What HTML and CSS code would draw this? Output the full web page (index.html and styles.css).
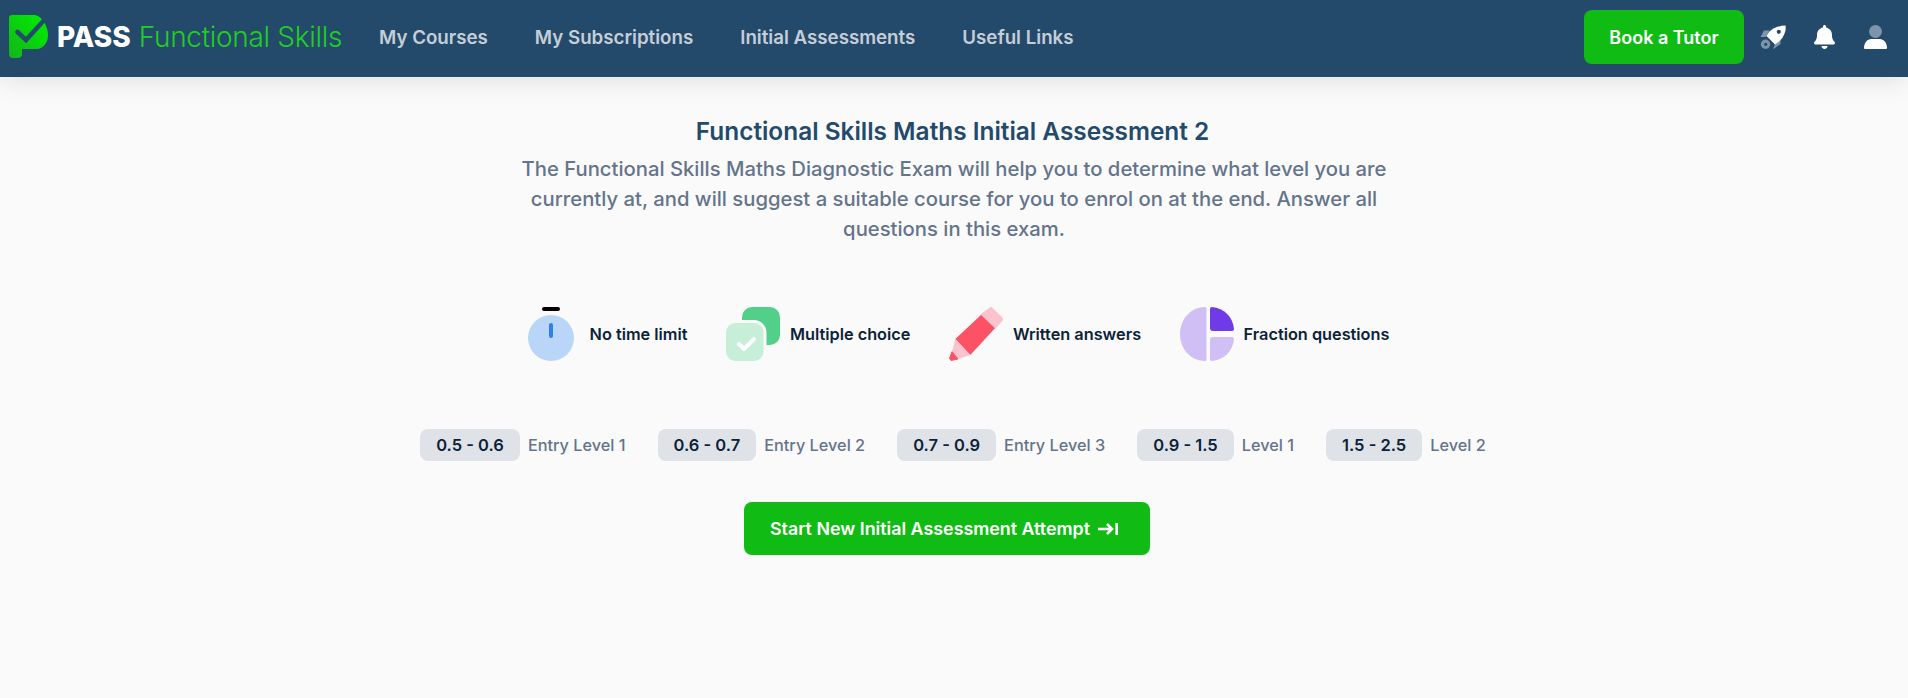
FILE: index.html
```html
<!DOCTYPE html>
<html lang="en">
  <head>
    <meta charset="UTF-8" />
    <meta name="viewport" content="width=device-width, initial-scale=1.0" />
    <title>Functional Skills Maths Initial Assessment 2</title>
    <link rel="stylesheet" href="styles.css">
  </head>
  <body>
    <header class="topbar">
      <a class="brand" href="#">
        <svg class="brand-mark" viewBox="0 0 40 44" width="40" height="44">
          <defs>
            <linearGradient id="markGreen" x1="0" y1="1" x2="1" y2="0">
              <stop offset="0" stop-color="#12b51a" />
              <stop offset="1" stop-color="#00f000" />
            </linearGradient>
          </defs>
          <path fill="url(#markGreen)" d="M3 0H26C34 2 39 12 39 20C39 30 32 34 28 34H13V39Q13 43 8 43H4Q0 43 0 39V3Q0 0 3 0Z" />
          <path fill="none" stroke="#244a6b" stroke-width="4.5" stroke-linecap="round" d="M8.5 17L17 25L38 2" />
        </svg>
        <span class="brand-pass">PASS</span>
        <span class="brand-name">Functional Skills</span>
      </a>
      <nav class="nav">
        <a href="#">My Courses</a>
        <a href="#">My Subscriptions</a>
        <a href="#">Initial Assessments</a>
        <a href="#">Useful Links</a>
      </nav>
      <div class="topbar-right">
        <a class="btn btn-tutor" href="#">Book a Tutor</a>
        <svg class="icon-rocket" viewBox="0 0 26 24" width="26" height="24">
          <path fill="#7d94aa" d="M9.500 5.500H4L0.500 12H6Z" />
          <path fill="#7d94aa" d="M20.500 14V19L13 24.500L15 19Z" />
          <circle cx="5.500" cy="19.300" r="4.700" fill="#7d94aa" />
          <circle cx="5.700" cy="19.300" r="1.600" fill="#244a6b" />
          <path fill="#fff" d="M25.500 0.500C19 0.500 13 3 9 7L6.500 11L15 19.500L18.500 17C23.500 12.500 26.500 6 25.500 0.500Z" />
          <circle cx="18.800" cy="6.800" r="2.100" fill="#244a6b" />
        </svg>
        <svg class="icon-bell" viewBox="0 0 448 512" width="21" height="24">
          <path fill="#fff" d="M224 0c-17.7 0-32 14.3-32 32V51.2C119 66 64 130.6 64 208v18.8c0 47-17.3 92.4-48.5 127.6l-7.4 8.3c-8.4 9.4-10.4 22.9-5.3 34.4S19.4 416 32 416H416c12.6 0 24-7.4 29.2-18.9s3.1-25-5.3-34.4l-7.4-8.3C401.3 319.2 384 273.9 384 226.8V208c0-77.4-55-142-128-156.8V32c0-17.7-14.3-32-32-32zm45.3 493.3c12-12 18.7-28.3 18.7-45.3H224 160c0 17 6.7 33.3 18.7 45.3s28.3 18.7 45.3 18.7s33.3-6.7 45.3-18.7z" />
        </svg>
        <svg class="icon-user" viewBox="0 0 23 24" width="23" height="24">
          <circle cx="11.5" cy="6.5" r="6.5" fill="#7d94aa" />
          <path fill="#fff" d="M7.5 14H15.5C20 14 23 18 23 23Q23 24 22 24H1Q0 24 0 23C0 18 3 14 7.5 14Z" />
        </svg>
      </div>
    </header>

    <main class="page">
      <h1>Functional Skills Maths Initial Assessment 2</h1>
      <p class="intro">
        The Functional Skills Maths Diagnostic Exam will help you to determine what level you are
        currently at, and will suggest a suitable course for you to enrol on at the end. Answer all
        questions in this exam.
      </p>

      <ul class="features">
        <li>
          <svg class="icon-watch" viewBox="0 0 54 54" width="54" height="54">
            <rect x="16" y="0" width="18" height="4" rx="2" fill="#000" />
            <circle cx="25" cy="31" r="23" fill="#b9d6f8" />
            <rect x="23" y="16" width="4" height="15" rx="2" fill="#2f80ed" />
          </svg>
          <span>No time limit</span>
        </li>
        <li>
          <svg viewBox="0 0 54 54" width="54" height="54">
            <rect x="16" y="0" width="38" height="38" rx="10" fill="#52d08a" />
            <rect x="-1.500" y="14.500" width="40.500" height="41" rx="11" fill="#c6eed9" stroke="#fafafa" stroke-width="3" />
            <path fill="none" stroke="#fff" stroke-width="4" stroke-linecap="round" stroke-linejoin="round" d="M13 37L18 42L28 32" />
          </svg>
          <span>Multiple choice</span>
        </li>
        <li>
          <svg viewBox="0 0 54 54" width="54" height="54">
            <path fill="#fbc4cc" stroke="#fbc4cc" stroke-width="3" stroke-linejoin="round" d="M33 8L42 1.500L53 12L46 20Z" />
            <path fill="#fd5266" d="M32 8L46 21.300L21.300 48L6.300 32Z" />
            <path fill="#fbc4cc" d="M6.300 32L21.300 48L9 52L3 44.700Z" />
            <path fill="#fd5266" stroke="#fd5266" stroke-width="1" stroke-linejoin="round" d="M3 44.700L9 52L2 53.500L0.500 51.300Z" />
          </svg>
          <span>Written answers</span>
        </li>
        <li>
          <svg viewBox="0 0 54 54" width="54" height="54">
            <path fill="#d0bff5" d="M25 0C11 0 0 12 0 27C0 42 11 54 25 54Q26.500 54 26.500 52V2Q26.500 0 25 0Z" />
            <path fill="#6f3be8" d="M30 2Q30 0 32 0C44 1 53 10 54 22Q54 24 52 24H33Q30 24 30 21Z" />
            <path fill="#d0bff5" d="M33 30H52Q54 30 54 32C53 44 44 53 32 54Q30 54 30 52V33Q30 30 33 30Z" />
          </svg>
          <span>Fraction questions</span>
        </li>
      </ul>

      <ul class="levels">
        <li><span class="pill">0.5 - 0.6</span>Entry Level 1</li>
        <li><span class="pill">0.6 - 0.7</span>Entry Level 2</li>
        <li><span class="pill">0.7 - 0.9</span>Entry Level 3</li>
        <li><span class="pill">0.9 - 1.5</span>Level 1</li>
        <li><span class="pill">1.5 - 2.5</span>Level 2</li>
      </ul>

      <a class="btn btn-start" href="#">
        Start New Initial Assessment Attempt
        <svg viewBox="0 0 20 14" width="20" height="14">
          <path fill="none" stroke="#fff" stroke-width="2.600" d="M0 7H13M9 2L14 7L9 12" />
          <path fill="none" stroke="#fff" stroke-width="2.600" d="M18.700 1V13" />
        </svg>
      </a>
    </main>
  </body>
</html>
```

FILE: styles.css
```css
body {
  margin: 0;
  background-color: #fafafa;
  font-family: Inter, "Liberation Sans", sans-serif;
  color: #0b2239;
}
a {
  text-decoration: none;
}
ul {
  list-style: none;
  margin: 0;
  padding: 0;
}

.topbar {
  display: flex;
  align-items: center;
  box-sizing: border-box;
  height: 77px;
  padding: 0 21px 3px 9px;
  background-color: #244a6b;
  box-shadow: 0 4px 24px rgba(0, 0, 0, 0.1);
}
.brand {
  display: flex;
  align-items: center;
  height: 44px;
}
.brand-mark {
  margin-right: 8px;
}
.brand-pass {
  font-size: 28px;
  font-weight: 800;
  color: #fff;
  margin-right: 8px;
}
.brand-name {
  font-size: 28px;
  font-weight: 300;
  letter-spacing: -0.3px;
  color: #1fd01f;
}
.nav {
  display: flex;
  gap: 47px;
  margin-left: 37px;
}
.nav a {
  font-size: 18.72px;
  font-weight: 600;
  color: #c5ced8;
}
.topbar-right {
  display: flex;
  align-items: center;
  margin-left: auto;
}
.btn {
  display: flex;
  align-items: center;
  justify-content: center;
  font-size: 18px;
  font-weight: 600;
  color: #fff;
  background-color: #10bc13;
  border-radius: 8px;
}
.btn-tutor {
  width: 160px;
  height: 54px;
  margin-right: 16px;
}
.icon-bell {
  margin-left: 28px;
}
.icon-user {
  margin-left: 29px;
}

.page {
  display: flex;
  flex-direction: column;
  align-items: center;
  padding-top: 38px;
}
h1 {
  margin: 0 3px 7px 0;
  font-size: 24.4px;
  line-height: 32px;
  font-weight: 600;
  color: #244a6b;
}
.intro {
  width: 896px;
  margin: 0;
  font-size: 20.25px;
  font-weight: 500;
  line-height: 30px;
  text-align: center;
  color: #64748b;
}

.features {
  display: flex;
  gap: 38.5px;
  margin-top: 63px;
  padding-left: 7px;
}
.features li {
  display: flex;
  align-items: center;
  gap: 10px;
  font-size: 16.3px;
  font-weight: 600;
}

.levels {
  display: flex;
  gap: 32px;
  margin-top: 68px;
  padding-right: 2px;
}
.levels li {
  display: flex;
  align-items: center;
  gap: 8px;
  font-size: 16.3px;
  font-weight: 500;
  color: #64748b;
}
.pill {
  padding: 0 16px;
  line-height: 32px;
  background-color: #dfe3e7;
  border-radius: 8px;
  font-size: 16.5px;
  font-weight: 600;
  color: #0b2239;
}

.btn-start {
  gap: 8px;
  height: 53px;
  margin: 41px 14px 0 0;
  padding: 0 32px 0 26px;
  font-size: 17.85px;
}
```
